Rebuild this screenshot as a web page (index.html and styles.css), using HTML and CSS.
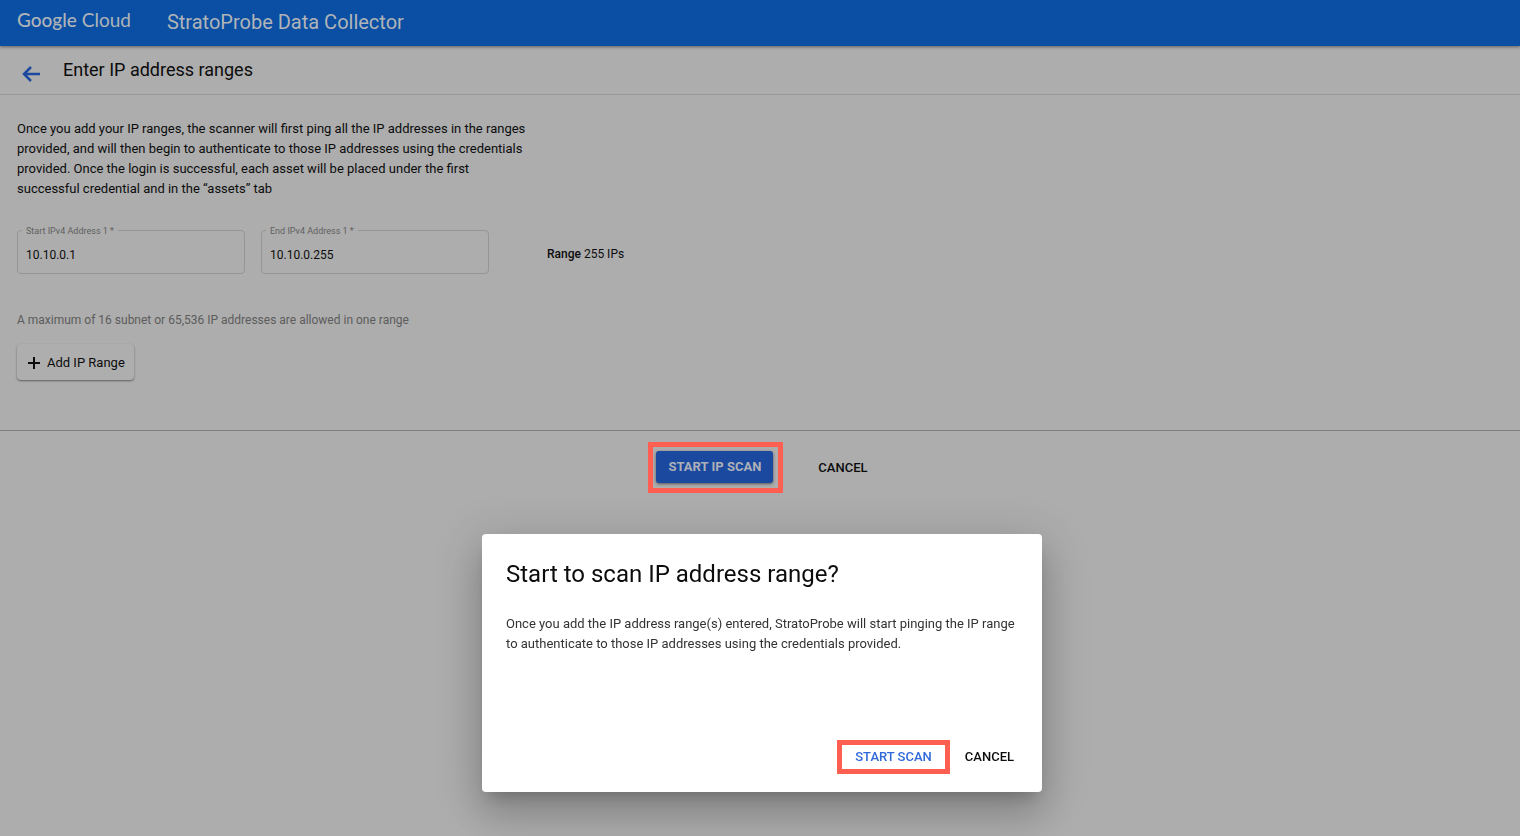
FILE: index.html
```html
<!DOCTYPE html>
<html lang="en">
<head>
<meta charset="utf-8">
<title>StratoProbe Data Collector</title>
<link rel="stylesheet" href="styles.css">
</head>
<body>
<header class="topbar">
  <div class="brand"><span class="brand-google">Google</span> Cloud</div>
  <div class="product">StratoProbe Data Collector</div>
</header>
<div class="toolbar">
  <button class="back" type="button" aria-label="Back">
    <svg width="18" height="16" viewBox="0 0 18 16" fill="none" stroke="currentColor" stroke-width="2.5"><path d="M18 8H2M9 1L2 8l7 7"/></svg>
  </button>
  <h1 class="page-title">Enter IP address ranges</h1>
</div>
<main>
  <section class="ranges">
    <p class="intro">Once you add your IP ranges, the scanner will first ping all the IP addresses in the ranges provided, and will then begin to authenticate to those IP addresses using the credentials provided. Once the login is successful, each asset will be placed under the first successful credential and in the “assets” tab</p>
    <div class="fields">
      <div class="field">
        <label class="field-label" for="start-ip">Start IPv4 Address 1 *</label>
        <input class="field-input" id="start-ip" type="text" value="10.10.0.1">
      </div>
      <div class="field">
        <label class="field-label" for="end-ip">End IPv4 Address 1 *</label>
        <input class="field-input" id="end-ip" type="text" value="10.10.0.255">
      </div>
      <div class="count"><span class="count-name">Range</span> 255 IPs</div>
    </div>
    <p class="hint">A maximum of 16 subnet or 65,536 IP addresses are allowed in one range</p>
    <button class="add" type="button">
      <svg width="12" height="12" viewBox="0 0 12 12" stroke="currentColor" stroke-width="2"><path d="M6 0v12M0 6h12"/></svg>
      Add IP Range
    </button>
  </section>
  <div class="actions">
    <div class="highlight highlight-page"><button class="primary" type="button">START IP SCAN</button></div>
    <button class="plain" type="button">CANCEL</button>
  </div>
</main>
<div class="overlay">
  <section class="dialog" role="dialog" aria-modal="true" aria-labelledby="dialog-title">
    <h2 class="dialog-title" id="dialog-title">Start to scan IP address range?</h2>
    <p class="dialog-text">Once you add the IP address range(s) entered, StratoProbe will start pinging the IP range to authenticate to those IP addresses using the credentials provided.</p>
    <div class="dialog-actions">
      <div class="highlight"><button class="plain confirm" type="button">START SCAN</button></div>
      <button class="plain" type="button">CANCEL</button>
    </div>
  </section>
</div>
</body>
</html>
```
FILE: styles.css
```css
* { box-sizing: border-box; }

body {
  margin: 0;
  min-height: 100vh;
  background: #adadad;
  color: #0c0c0c;
  font: 13px/20px Roboto, sans-serif;
}

h1, h2, p { margin: 0; font-weight: 400; }

button {
  border: 0;
  padding: 0;
  background: none;
  color: inherit;
  font: inherit;
}

.topbar {
  position: relative;
  display: flex;
  align-items: center;
  gap: 36px;
  height: 46px;
  padding: 0 17px 2px;
  background: #0a4fa3;
  color: #b0b4b8;
  box-shadow: 0 1px 3px rgba(0, 0, 0, .45);
}

.brand { padding-bottom: 4px; font: 19px/24px Lato, sans-serif; }
.brand-google { font-weight: 500; }
.product { font-size: 20px; line-height: 24px; }

.toolbar {
  display: flex;
  align-items: flex-start;
  gap: 23px;
  height: 49px;
  padding: 12px 22px 0;
  border-bottom: 1px solid #999;
}

.back {
  display: flex;
  padding-top: 8px;
  color: #1d4a9f;
}

.page-title { font-size: 18px; line-height: 24px; }

.ranges {
  padding: 24px 17px 50px;
  border-bottom: 1px solid #7d7d7d;
}

.intro { max-width: 512px; }

.fields {
  display: flex;
  align-items: center;
  gap: 16px;
  margin-top: 31px;
}

.field { position: relative; width: 228px; }

.field-input {
  display: block;
  width: 100%;
  height: 44px;
  padding: 5px 8px 0;
  border: 1px solid #959595;
  border-radius: 4px;
  background: transparent;
  color: inherit;
  font: 12px/20px Roboto, sans-serif;
}

.field-label {
  position: absolute;
  top: -5px;
  left: 5px;
  padding: 0 4px;
  background: #adadad;
  color: #606060;
  font-size: 9px;
  line-height: 12px;
}

.count { margin-left: 42px; padding-top: 4px; font-size: 12px; }
.count-name { font-weight: 500; }

.hint { margin-top: 36px; color: #5c5c5c; font-size: 12px; }

.add {
  display: flex;
  align-items: center;
  gap: 7px;
  height: 36px;
  margin-top: 14px;
  padding: 2px 9px 0 11px;
  border-radius: 4px;
  background: #aeaeae;
  box-shadow: 0 1px 2px rgba(0, 0, 0, .45);
}

.actions {
  display: flex;
  align-items: center;
  justify-content: center;
  gap: 35px;
  padding: 11px 4px 0 0;
}

.highlight { border: 5px solid #ff5f50; }
.highlight-page { padding: 4px 5px 5px 3px; }

.primary {
  height: 32px;
  padding: 0 12px;
  border-radius: 3px;
  background: #1b49a0;
  color: #adb0b8;
  font-weight: 700;
  box-shadow: 0 1px 3px rgba(0, 0, 0, .5);
}

.plain { font-weight: 500; }

.overlay {
  position: fixed;
  inset: 0;
  display: flex;
  align-items: flex-end;
  justify-content: center;
  padding: 0 0 44px 4px;
}

.dialog {
  width: 560px;
  padding: 24px 24px 18px;
  border-radius: 4px;
  background: #fff;
  box-shadow: 0 11px 15px -7px rgba(0, 0, 0, .2), 0 24px 38px 3px rgba(0, 0, 0, .14), 0 9px 46px 8px rgba(0, 0, 0, .12);
}

.dialog-title { font-size: 24px; line-height: 32px; }
.dialog-text { margin-top: 24px; color: #333; }

.dialog-actions {
  display: flex;
  align-items: center;
  justify-content: flex-end;
  gap: 15px;
  margin-top: 86px;
  padding-right: 4px;
}

.confirm {
  height: 24px;
  padding: 0 13px;
  color: #3069da;
}
```
